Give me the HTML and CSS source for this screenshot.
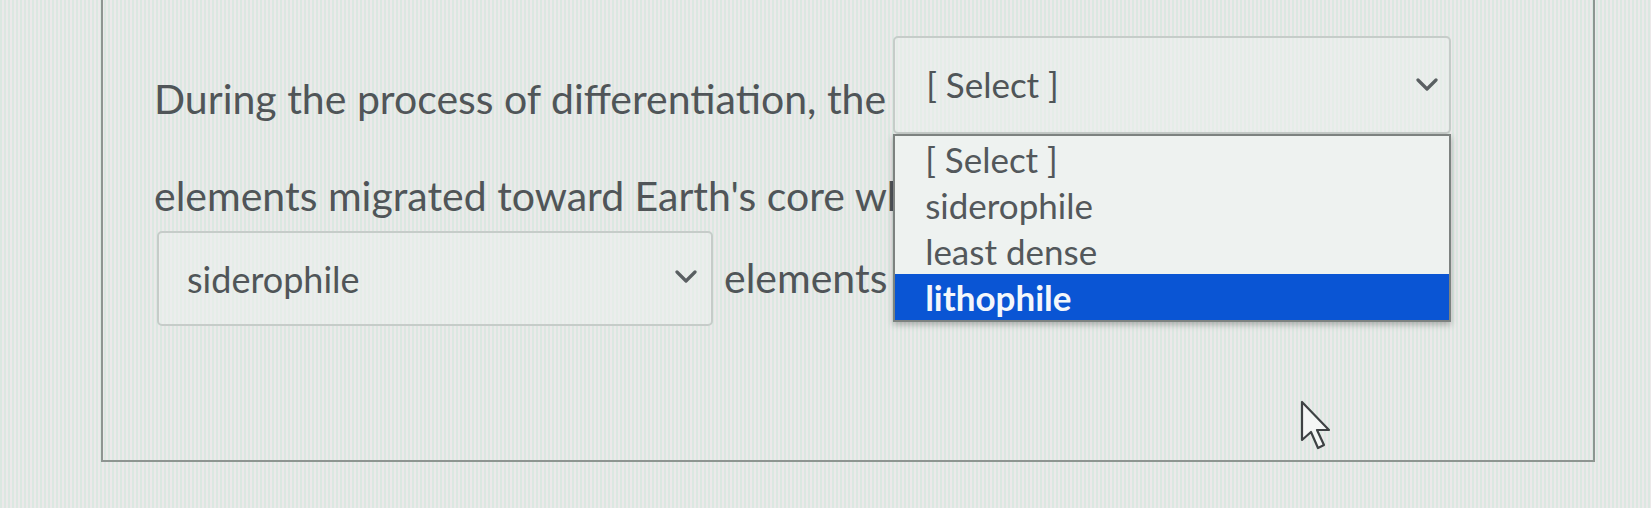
FILE: index.html
```html
<!DOCTYPE html>
<html>
<head>
<meta charset="utf-8">
<link rel="stylesheet" href="styles.css">
</head>
<body>
<div class="page">
  <div class="card">
    <div class="row row1">
      <span class="txt">During the process of differentiation, the</span>
      <div class="sel-wrap">
        <div class="sel sel1">
          <span class="sel-text">[ Select ]</span>
          <svg class="chev" width="22" height="14" viewBox="0 0 22 14"><path d="M2 2 L11 11 L20 2" fill="none" stroke="#5a5f62" stroke-width="3.2" stroke-linecap="round" stroke-linejoin="round"/></svg>
        </div>
        <ul class="list">
          <li class="opt">[ Select ]</li>
          <li class="opt">siderophile</li>
          <li class="opt">least dense</li>
          <li class="opt hl">lithophile</li>
        </ul>
      </div>
    </div>
    <div class="row row2">
      <span class="txt">elements migrated toward Earth's core while the</span>
    </div>
    <div class="row row3">
      <div class="sel sel2">
        <span class="sel-text">siderophile</span>
        <svg class="chev" width="22" height="14" viewBox="0 0 22 14"><path d="M2 2 L11 11 L20 2" fill="none" stroke="#5a5f62" stroke-width="3.2" stroke-linecap="round" stroke-linejoin="round"/></svg>
      </div>
      <span class="txt txt3">elements rose toward the surface.</span>
    </div>
  </div>
  <svg class="cursor" width="34" height="52" viewBox="0 0 34 52"><path d="M3 2 L3 40 L12 32 L19 48 L25 45 L18 30 L30 30 Z" fill="#f4f6f5" stroke="#3e4244" stroke-width="2.2" stroke-linejoin="round"/></svg>
</div>
</body>
</html>
```

FILE: styles.css
```css
html, body {
  margin: 0;
  padding: 0;
}
body {
  width: 1651px;
  height: 508px;
  overflow: hidden;
  background-color: #e4eae6;
  background-image: repeating-linear-gradient(90deg, #dbe8e1 0px, #dbe8e1 2px, #ece9ea 2px, #ece9ea 4px);
  font-family: Lato, "Open Sans", sans-serif;
  color: #505558;
}
.page {
  position: relative;
  width: 1651px;
  height: 508px;
}
.card {
  margin-left: 101px;
  width: 1494px;
  height: 462px;
  border: 2px solid #8e9591;
  border-top: none;
  box-sizing: border-box;
  padding-left: 51px;
  overflow: hidden;
}
.row {
  display: flex;
  white-space: nowrap;
}
.txt {
  font-size: 41px;
  line-height: 1.2;
}
.row1 {
  padding-top: 36px;
  align-items: flex-start;
}
.row1 .txt {
  margin-top: 38px;
}
.sel-wrap {
  position: relative;
  margin-left: 7px;
}
.sel {
  position: relative;
  box-sizing: border-box;
  border: 2px solid #c6ccc9;
  border-radius: 5px;
  background: rgba(236, 240, 238, 0.55);
  font-size: 35px;
  line-height: 42px;
}
.sel1 {
  width: 558px;
  height: 98px;
  padding: 25px 0 0 31px;
}
.sel2 {
  width: 556px;
  height: 95px;
  padding: 25px 0 0 28px;
  font-size: 36px;
}
.chev {
  position: absolute;
  right: 11px;
  top: 40px;
}
.sel2 .chev {
  right: 14px;
  top: 37px;
}
.list {
  position: absolute;
  left: 0;
  top: 100%;
  margin: 0;
  padding: 0;
  list-style: none;
  width: 558px;
  box-sizing: border-box;
  border: 2px solid #7d8280;
  background: #eef2f0;
  box-shadow: 0 3px 6px rgba(0, 0, 0, 0.25);
  z-index: 2;
}
.opt {
  height: 46px;
  font-size: 35px;
  line-height: 46px;
  padding-left: 30px;
  color: #53585b;
}
.opt.hl {
  background: #0a55d4;
  color: #f4f7fb;
  font-weight: 700;
}
.row2 {
  margin-top: 37px;
}
.row3 {
  margin-top: 11px;
  align-items: baseline;
}
.sel2 {
  margin-left: 3px;
}
.txt3 {
  margin-left: 11px;
}
.cursor {
  position: absolute;
  left: 1299px;
  top: 400px;
}
```
